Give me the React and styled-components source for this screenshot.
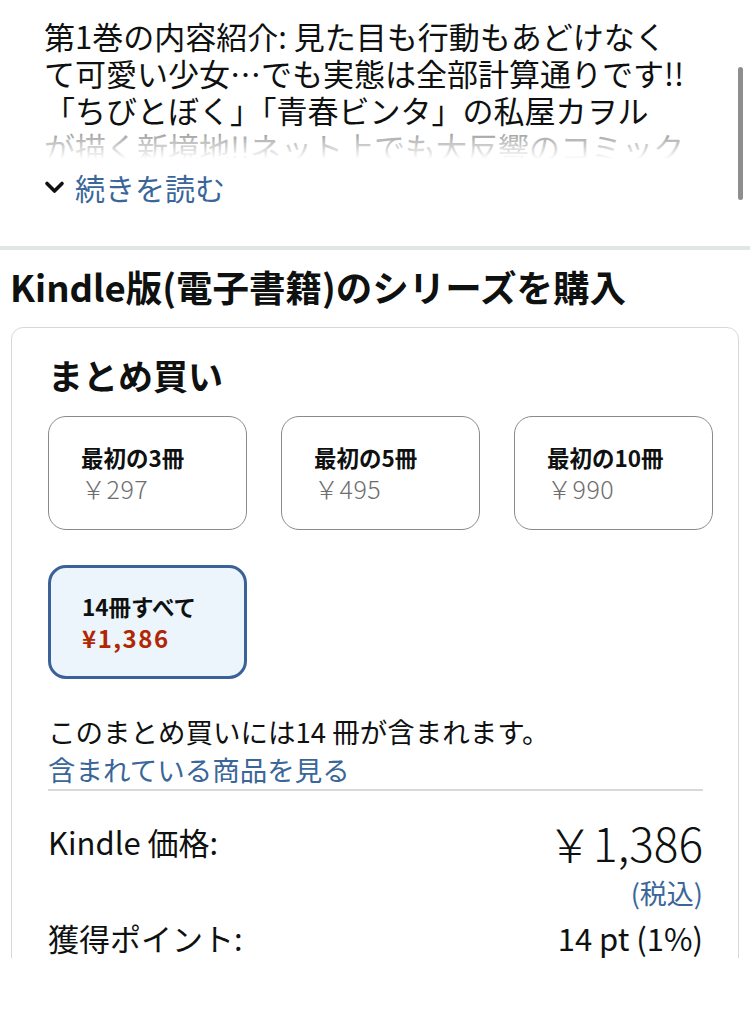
import React from 'react'
import styled, {createGlobalStyle} from 'styled-components'

const GlobalStyle = createGlobalStyle`
    body {
        margin: 0;
        background: #ffffff;
        font-family: "Noto Sans CJK JP", "Noto Sans", sans-serif;
        color: #0f1111;
    }
`

const Page = styled.div`
    position: relative;
    height: 958px;
    overflow: hidden;
`

const Scrollbar = styled.div`
    position: absolute;
    top: 67px;
    right: 7px;
    width: 5px;
    height: 133px;
    border-radius: 3px;
    background: #8e8e8e;
`

const Description = styled.section`
    padding: 17px 40px 0 44px;
    height: 229px;
`

const TextBox = styled.div`
    position: relative;
    height: 150px;
    overflow: hidden;
    font-size: 31px;
    line-height: 37px;

    &::after {
        content: "";
        position: absolute;
        left: 0;
        right: 0;
        bottom: 0;
        height: 40px;
        background: linear-gradient(rgba(255, 255, 255, 0.5), #ffffff 80%);
    }
`

const Line = styled.div`
    white-space: nowrap;
`

const ReadMore = styled.div`
    display: flex;
    align-items: center;
    gap: 10px;
    height: 36px;
    margin-top: 2px;
    font-size: 30px;
    color: #3a6699;
`

const Band = styled.div`
    height: 4px;
    background: #e3e6e6;
`

const Heading = styled.h2`
    margin: 16px 0 19px 10px;
    font-size: 36.5px;
    line-height: 42px;
    font-weight: 700;
`

const Card = styled.div`
    margin: 0 11px;
    padding: 26px 35px 0 36px;
    border: 1.5px solid #d5d9d9;
    border-radius: 12px;
    min-height: 700px;
`

const CardTitle = styled.h3`
    margin: 0 0 20px;
    font-size: 35px;
    line-height: 42px;
    font-weight: 700;
`

const Options = styled.div`
    display: grid;
    grid-template-columns: repeat(3, 199px);
    grid-auto-rows: 114px;
    gap: 35px 34px;
`

const Option = styled.div`
    display: flex;
    flex-direction: column;
    justify-content: center;
    padding-left: ${p => (p.selected ? 31 : 32)}px;
    border: ${p => (p.selected ? '3px solid #3a6299' : '1.5px solid #8a8a8a')};
    border-radius: 18px;
    background: ${p => (p.selected ? '#edf5fc' : '#ffffff')};
`

const OptionName = styled.div`
    font-size: 22.5px;
    line-height: 31px;
    font-weight: 700;
`

const OptionPrice = styled.div`
    font-size: ${p => (p.selected ? 24 : 25)}px;
    line-height: 31px;
    letter-spacing: ${p => (p.selected ? 1.5 : 0.5)}px;
    color: ${p => (p.selected ? '#b12704' : '#6e6e6e')};
    font-weight: ${p => (p.selected ? 700 : 300)};
`

const Note = styled.p`
    margin: 33px 0 0;
    font-size: 27.5px;
    line-height: 38px;
`

const Link = styled.a`
    display: block;
    font-size: 27.5px;
    line-height: 38px;
    color: #3a6699;
    text-decoration: none;
`

const Rule = styled.hr`
    margin: 1px 0 0;
    border: none;
    border-top: 2px solid #d5d9d9;
`

const Row = styled.div`
    display: flex;
    justify-content: space-between;
    align-items: center;
    margin-top: ${p => p.top || 0}px;
    font-size: 31px;
    line-height: 36px;
`

const BigPrice = styled.span`
    font-size: 46px;
    line-height: 50px;
    font-weight: 300;
`

const Tax = styled.div`
    margin-top: 10px;
    text-align: right;
    font-size: 27px;
    line-height: 32px;
    color: #3a6699;
`

const options = [
    {name: '最初の3冊', price: '￥297'},
    {name: '最初の5冊', price: '￥495'},
    {name: '最初の10冊', price: '￥990'},
    {name: '14冊すべて', price: '¥1,386', selected: true},
]

const lines = [
    '第1巻の内容紹介: 見た目も行動もあどけなく',
    'て可愛い少女…でも実態は全部計算通りです!!',
    '「ちびとぼく」「青春ビンタ」の私屋カヲル',
    'が描く新境地!!ネット上でも大反響のコミック',
]

function App() {
    return (
        <Page>
            <GlobalStyle />
            <Scrollbar />
            <Description>
                <TextBox>
                    {lines.map(l => <Line key={l}>{l}</Line>)}
                </TextBox>
                <ReadMore>
                    <svg width="21" height="14" viewBox="0 0 21 14">
                        <path d="M3 3.5 L10.5 11 L18 3.5" fill="none" stroke="#111" strokeWidth="3.6" strokeLinecap="round" strokeLinejoin="round" />
                    </svg>
                    <span>続きを読む</span>
                </ReadMore>
            </Description>
            <Band />
            <Heading>Kindle版(電子書籍)のシリーズを購入</Heading>
            <Card>
                <CardTitle>まとめ買い</CardTitle>
                <Options>
                    {options.map(o => (
                        <Option key={o.name} selected={o.selected}>
                            <OptionName>{o.name}</OptionName>
                            <OptionPrice selected={o.selected}>{o.price}</OptionPrice>
                        </Option>
                    ))}
                </Options>
                <Note>このまとめ買いには14 冊が含まれます。</Note>
                <Link href="#">含まれている商品を見る</Link>
                <Rule />
                <Row top={26}>
                    <span>Kindle 価格:</span>
                    <BigPrice>￥1,386</BigPrice>
                </Row>
                <Tax>(税込)</Tax>
                <Row top={11}>
                    <span>獲得ポイント:</span>
                    <span>14 pt (1%)</span>
                </Row>
            </Card>
        </Page>
    )
}

export default App
